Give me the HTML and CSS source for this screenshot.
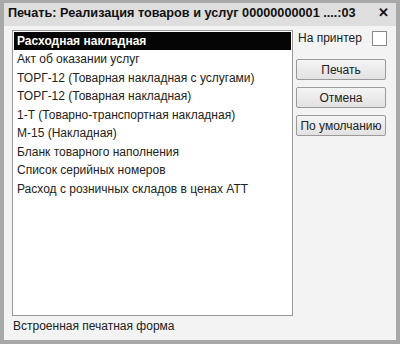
FILE: index.html
```html
<!DOCTYPE html>
<html lang="ru">
<head>
<meta charset="utf-8">
<link rel="stylesheet" href="styles.css">
</head>
<body>
<div class="window">
  <div class="titlebar">
    <span class="title">Печать: Реализация товаров и услуг 00000000001 ....:03</span>
    <span class="close">✕</span>
  </div>
  <div class="body">
    <div class="main">
      <div class="listbox">
        <div class="item selected">Расходная накладная</div>
        <div class="item">Акт об оказании услуг</div>
        <div class="item">ТОРГ-12 (Товарная накладная с услугами)</div>
        <div class="item">ТОРГ-12 (Товарная накладная)</div>
        <div class="item">1-Т (Товарно-транспортная накладная)</div>
        <div class="item">М-15 (Накладная)</div>
        <div class="item">Бланк товарного наполнения</div>
        <div class="item">Список серийных номеров</div>
        <div class="item">Расход с розничных складов в ценах АТТ</div>
      </div>
      <div class="side">
        <div class="printer-row">
          <span>На принтер</span>
          <span class="checkbox"></span>
        </div>
        <div class="btn">Печать</div>
        <div class="btn">Отмена</div>
        <div class="btn">По умолчанию</div>
      </div>
    </div>
    <div class="footer">Встроенная печатная форма</div>
  </div>
</div>
</body>
</html>
```

FILE: styles.css
```css
html, body {
  margin: 0;
  padding: 0;
  background: #ffffff;
}
.window {
  width: 400px;
  height: 344px;
  box-sizing: border-box;
  border: 4px solid #a8a8a8;
  border-top-width: 3px;
  background: #f3f3f3;
  font-family: "Liberation Sans", Arial, sans-serif;
  font-size: 12px;
  color: #1a1a1a;
  display: flex;
  flex-direction: column;
}
.titlebar {
  height: 23px;
  background: #dedede;
  display: flex;
  align-items: center;
  justify-content: space-between;
  padding: 0 7px 4px 4px;
  box-sizing: border-box;
  flex-shrink: 0;
}
.title {
  font-weight: bold;
  font-size: 12.7px;
  color: #111;
  white-space: nowrap;
}
.close {
  font-weight: bold;
  font-size: 13px;
  color: #111;
}
.body {
  flex: 1;
  display: flex;
  flex-direction: column;
  padding: 4px 0 0 8px;
}
.main {
  display: flex;
  gap: 3px;
}
.listbox {
  width: 281px;
  height: 286px;
  box-sizing: border-box;
  border: 1px solid #999;
  background: #fff;
  padding: 1px 1px 0 1px;
}
.item {
  height: 18.5px;
  line-height: 18.5px;
  padding-left: 3px;
  white-space: nowrap;
  overflow: hidden;
  color: #222;
}
.item.selected {
  background: #050505;
  color: #fff;
  font-weight: bold;
  height: 18px;
  line-height: 18px;
}
.side {
  width: 91px;
  display: flex;
  flex-direction: column;
  gap: 7px;
}
.printer-row {
  display: flex;
  align-items: center;
  justify-content: space-between;
  height: 14px;
  padding: 1px 0 0 2px;
  margin-bottom: 7px;
}
.checkbox {
  width: 13px;
  height: 13px;
  border: 1px solid #888;
  background: #fff;
}
.btn {
  width: 90px;
  height: 21px;
  box-sizing: border-box;
  border: 1px solid #9a9a9a;
  border-radius: 2px;
  background: linear-gradient(#f4f4f4, #e2e2e2);
  display: flex;
  align-items: center;
  justify-content: center;
  color: #222;
}
.footer {
  margin-top: 3px;
  padding-left: 1px;
  color: #222;
}
```
